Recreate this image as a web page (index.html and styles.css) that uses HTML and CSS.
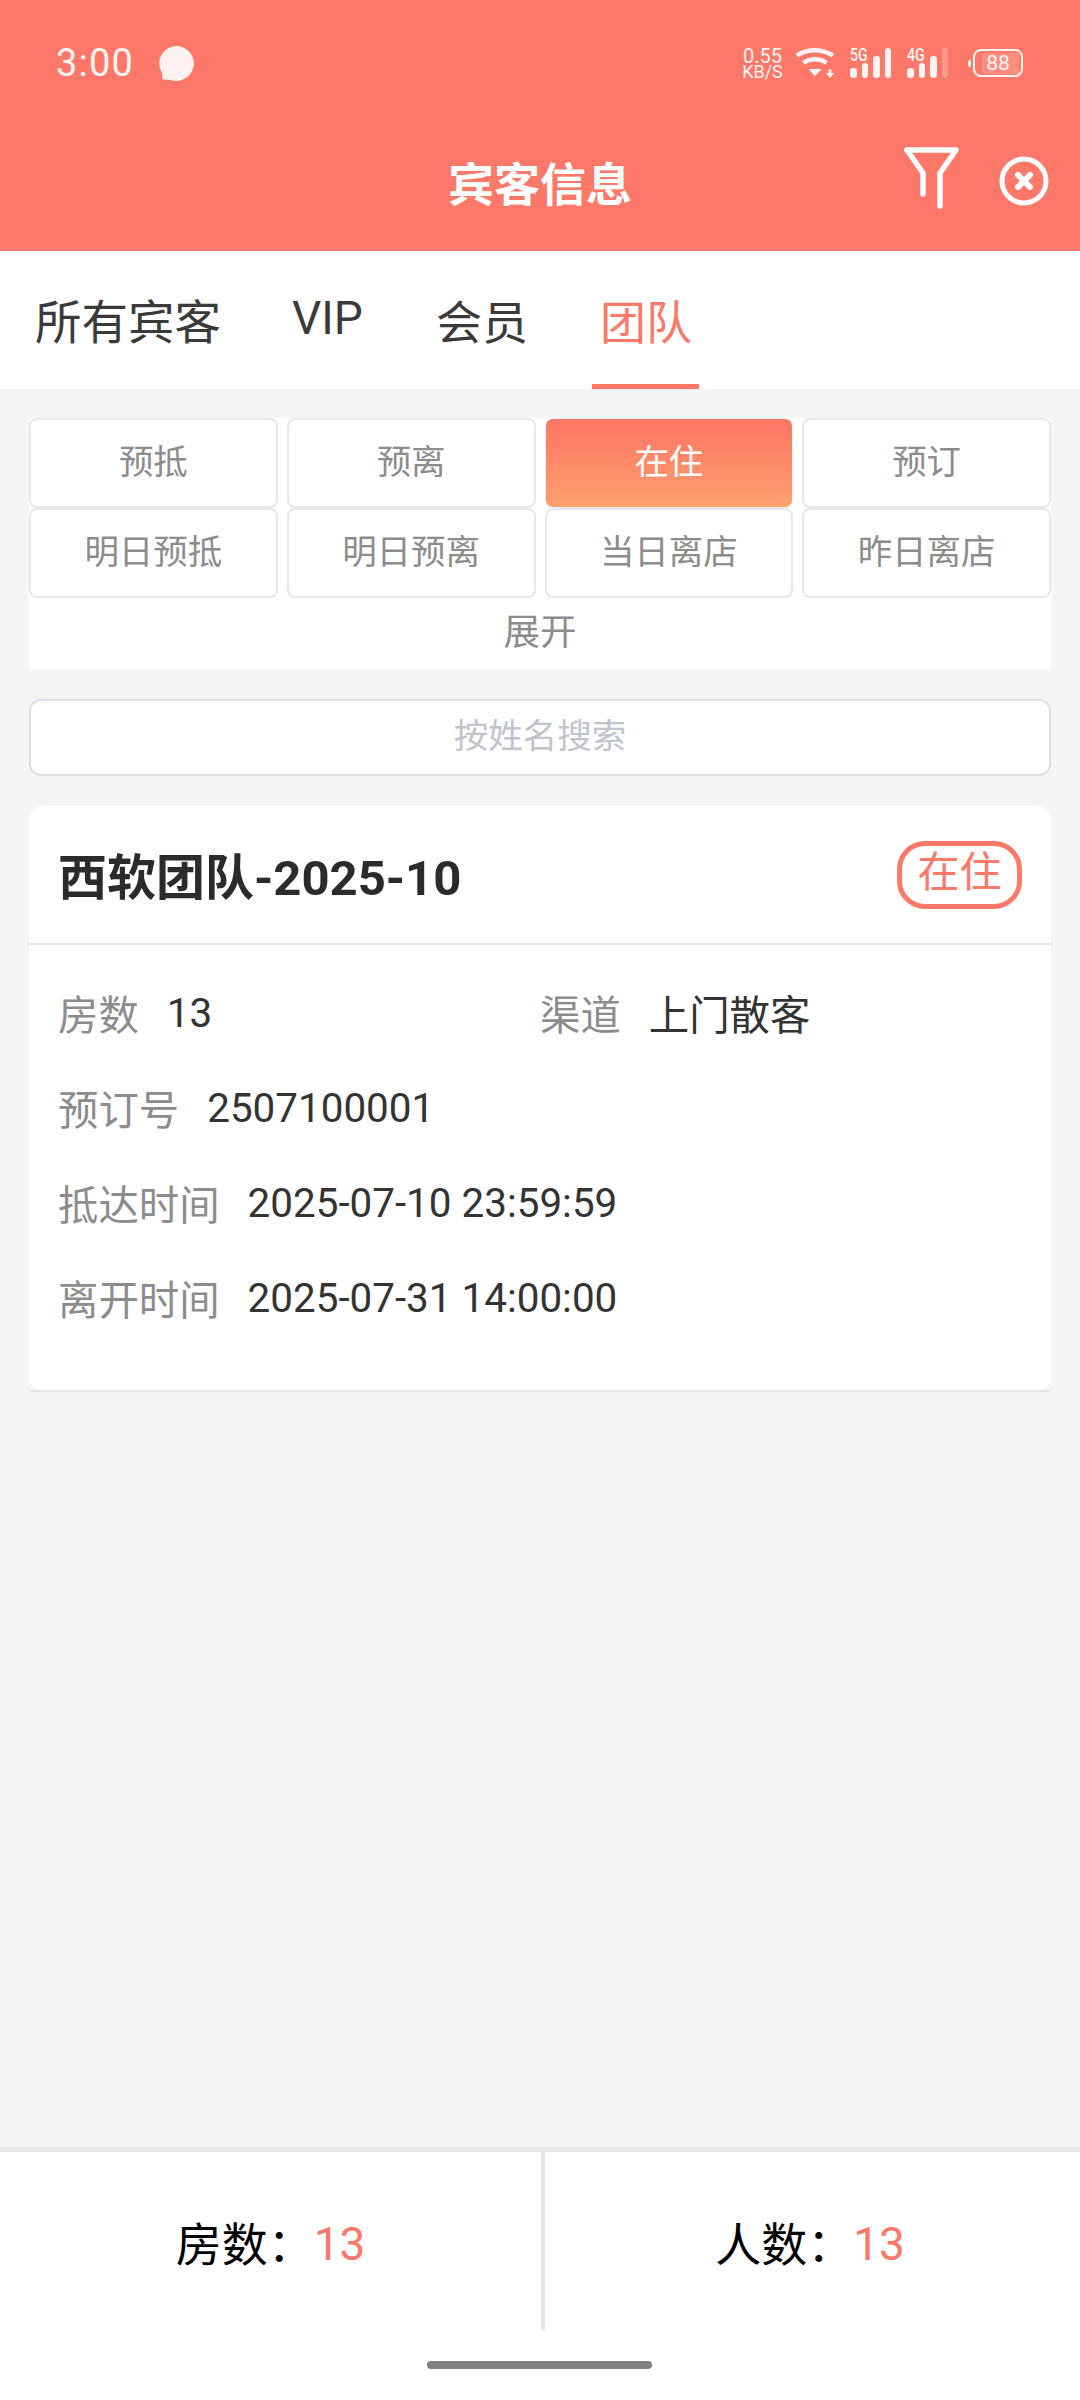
FILE: index.html
```html
<!DOCTYPE html>
<html lang="zh-CN">
<head>
<meta charset="utf-8">
<title>宾客信息</title>
<link rel="stylesheet" href="styles.css">
</head>
<body>
<div class="app">
  <header class="header">
    <div class="statusbar">
      <div class="status-left">
        <span class="clock">3:00</span>
        <svg class="bubble" width="35" height="35" viewBox="0 0 35 35"><path d="M17.500 0a17.500 17.500 0 1 1-6 34l-8-.8L2.800 26.500A17.500 17.500 0 0 1 17.500 0z" fill="#fff" fill-opacity=".9"/></svg>
      </div>
      <div class="status-right">
        <span class="speed"><span class="speed-val">0.55</span><span class="speed-unit">KB/S</span></span>
        <svg class="wifi" width="40" height="30" viewBox="0 0 40 30" fill="none" stroke="#fff" stroke-opacity=".92"><path d="M2 7.500C12 .500 27 .500 38 7.500" stroke-width="4.500"/><path d="M8.500 15c7-5 16-5 23 0" stroke-width="4.500"/><path d="M13.500 21h13L20 28z" fill="#fff" stroke="none"/><path d="M35 21.500v4" stroke-width="3"/><path d="M31 25h8l-4 5z" fill="#fff" stroke="none"/></svg>
        <span class="signal sig-5g">
          <span class="net">5G</span>
          <span class="bars"><i class="b1"></i><i class="b2"></i><i class="b3"></i><i class="b4"></i></span>
        </span>
        <span class="signal sig-4g">
          <span class="net">4G</span>
          <span class="bars"><i class="b1"></i><i class="b2"></i><i class="b3"></i><i class="b4 dim"></i></span>
        </span>
        <span class="battery"><span class="cap"></span><span class="batt-body"><span class="level"></span><span class="pct">88</span></span></span>
      </div>
    </div>
    <div class="titlebar">
      <h1 class="title">宾客信息</h1>
      <svg class="icon-filter" width="60" height="66" viewBox="0 0 60 66" fill="none" stroke="#fff" stroke-width="5.500" stroke-linejoin="round" stroke-linecap="round"><path d="M5 5h49L38 28v33"/><path d="M5 5l16 23v21"/></svg>
      <svg class="icon-close" width="50" height="50" viewBox="0 0 50 50" fill="none" stroke="#fff"><circle cx="25" cy="25" r="22" stroke-width="5"/><path d="M19 19l12 12M31 19L19 31" stroke-width="6" stroke-linecap="round"/></svg>
    </div>
  </header>

  <nav class="tabs">
    <span class="tab tab-all">所有宾客</span>
    <span class="tab tab-vip">VIP</span>
    <span class="tab tab-member">会员</span>
    <span class="tab tab-team active">团队</span>
  </nav>

  <main class="content">
    <section class="filters">
      <div class="filter-grid">
        <button class="chip">预抵</button>
        <button class="chip">预离</button>
        <button class="chip on">在住</button>
        <button class="chip">预订</button>
        <button class="chip">明日预抵</button>
        <button class="chip">明日预离</button>
        <button class="chip">当日离店</button>
        <button class="chip">昨日离店</button>
      </div>
      <div class="expand">展开</div>
    </section>

    <div class="search">按姓名搜索</div>

    <div class="card-shell">
      <article class="card">
        <div class="card-head">
          <span class="card-title">西软团队-2025-10</span>
          <span class="badge">在住</span>
        </div>
        <div class="card-body">
          <div class="row">
            <div class="field half"><span class="label">房数</span><span class="value digits">13</span></div>
            <div class="field"><span class="label">渠道</span><span class="value">上门散客</span></div>
          </div>
          <div class="row"><div class="field"><span class="label">预订号</span><span class="value digits">2507100001</span></div></div>
          <div class="row"><div class="field"><span class="label">抵达时间</span><span class="value digits">2025-07-10 23:59:59</span></div></div>
          <div class="row"><div class="field"><span class="label">离开时间</span><span class="value digits">2025-07-31 14:00:00</span></div></div>
        </div>
      </article>
    </div>
  </main>

  <footer class="footer">
    <div class="totals">
      <div class="total">房数：<span class="num">13</span></div>
      <div class="total">人数：<span class="num">13</span></div>
    </div>
    <div class="home"><span class="home-bar"></span></div>
  </footer>
</div>
</body>
</html>
```
FILE: styles.css
```css
* { box-sizing: border-box; }
html, body { margin: 0; padding: 0; }
body { font-family: Roboto, "Noto Sans CJK SC", sans-serif; background: #f5f5f5; }
.app { width: 1080px; height: 2400px; display: flex; flex-direction: column; overflow: hidden; }

.header { height: 251px; background: #fd7868; color: #fff; flex: none; }
.statusbar { height: 126px; padding: 48px 57px 0 56px; display: flex; justify-content: space-between; align-items: flex-start; }
.status-left { display: flex; align-items: center; gap: 25px; height: 30px; }
.clock { font-size: 38px; line-height: 30px; letter-spacing: 1.200px; color: #fff; opacity: .92; }
.status-right { display: flex; align-items: center; height: 30px; }
.speed { display: flex; flex-direction: column; align-items: center; width: 43px; opacity: .92; }
.speed-val { display: block; font-size: 20px; line-height: 16px; }
.speed-unit { display: block; font-size: 18px; line-height: 15px; }
.wifi { margin-left: 11px; }
.signal { position: relative; width: 41px; height: 30px; }
.sig-5g { margin-left: 15px; }
.sig-4g { margin-left: 16px; }
.net { position: absolute; left: 0; top: -1px; font-size: 18px; line-height: 16px; font-weight: 500; transform: scaleX(.78); transform-origin: left center; opacity: .92; }
.bars { position: absolute; inset: 0; display: flex; align-items: flex-end; justify-content: flex-start; gap: 5px; }
.bars i { display: block; width: 6.500px; border-radius: 3.250px; background: #fff; opacity: .92; }
.b1 { height: 10px; }
.b2 { height: 15px; }
.b3 { height: 22px; }
.b4 { height: 30px; }
.bars .dim { opacity: .25; }
.battery { display: flex; align-items: center; gap: 2px; margin-left: 20px; }
.cap { width: 3px; height: 7px; background: #fff; opacity: .9; border-radius: 2px 0 0 2px; }
.batt-body { position: relative; width: 50px; height: 28px; border: 2.500px solid #fff; border-radius: 8px; opacity: .92; display: flex; align-items: center; justify-content: center; }
.level { position: absolute; left: 6.500px; top: 1.500px; bottom: 1.500px; width: 37px; background: rgba(255,255,255,.18); }
.pct { position: relative; font-size: 21px; line-height: 22px; }

.titlebar { position: relative; height: 125px; }
.title { margin: 0; text-align: center; font-size: 46px; font-weight: 700; line-height: 60px; padding-top: 29px; color: #fff; }
.icon-filter { position: absolute; left: 902px; top: 19px; }
.icon-close { position: absolute; left: 999px; top: 30px; }

.tabs { position: relative; height: 138px; background: #fff; flex: none; color: #3a3a3a; font-size: 46.500px; }
.tab { position: absolute; line-height: 60px; top: 42px; white-space: nowrap; }
.tab-all { left: 35px; }
.tab-vip { left: 292px; top: 37px; font-size: 46px; }
.tab-member { left: 436px; font-size: 46px; }
.tab-team { left: 600px; font-size: 46px; }
.active { color: #fd7868; }
.active::after { content: ""; position: absolute; left: -8px; width: 107px; top: 91px; height: 5px; background: #fd7868; }

.content { flex: 1; padding: 29px 29px 0; display: flex; flex-direction: column; }
.filters { background: #fff; height: 252px; flex: none; }
.filter-grid { display: grid; grid-template-columns: repeat(4, 1fr); column-gap: 9px; }
.chip { height: 90px; padding: 0 0 8px; margin: 0; border: 2px solid #e8e8e8; border-radius: 8px; background: #fff; color: #8c8c8c; font: 34.500px Roboto, "Noto Sans CJK SC", sans-serif; }
.chip.on { color: #fff; border: 1px solid #f0f0f0; background: linear-gradient(to bottom, #fe7565, #fe9f6e); }
.expand { height: 72px; line-height: 69px; text-align: center; font-size: 36.500px; color: #8c8c8c; }

.search { margin-top: 29px; height: 77px; border: 2px solid #dcdfe8; border-radius: 12px; background: #fff; color: #c0c4cc; font-size: 34.500px; line-height: 71px; text-align: center; flex: none; }

.card-shell { margin-top: 30px; height: 586px; flex: none; border-bottom: 2px solid #e6e6e6; }
.card { height: 584px; background: #fff; border-radius: 14px; }
.card-head { height: 139px; padding: 0 29px; display: flex; align-items: center; justify-content: space-between; border-bottom: 2px solid #e8e8e8; }
.card-title { font-size: 49px; font-weight: 700; color: #2b2b2b; padding-bottom: 3px; }
.badge { width: 125px; height: 68px; border: 5px solid #fd7868; border-radius: 28px; color: #fd7868; font-size: 42px; line-height: 54px; text-align: center; }
.card-body { padding: 20px 29px 0; }
.row { display: flex; height: 95px; align-items: center; }
.field { display: flex; align-items: center; }
.field.half { width: 482px; }
.label { font-size: 40.400px; color: #8c8c8c; margin-right: 28px; }
.value { font-size: 40.400px; color: #333; }
.digits { padding-top: 1px; }

.footer { height: 253px; flex: none; background: #fff; border-top: 5px solid #e6e6e6; }
.totals { display: grid; grid-template-columns: 545px 1fr; height: 178px; }
.total { display: flex; align-items: center; justify-content: center; font-size: 46px; color: #000; }
.total:first-child { border-right: 4px solid #e6e6e6; }
.total:last-child { padding-right: 5px; }
.num { color: #fd7868; padding-top: 6px; }
.home { display: flex; justify-content: center; padding-top: 31px; padding-right: 1px; }
.home-bar { width: 225px; height: 8px; border-radius: 4px; background: #808080; }
```
